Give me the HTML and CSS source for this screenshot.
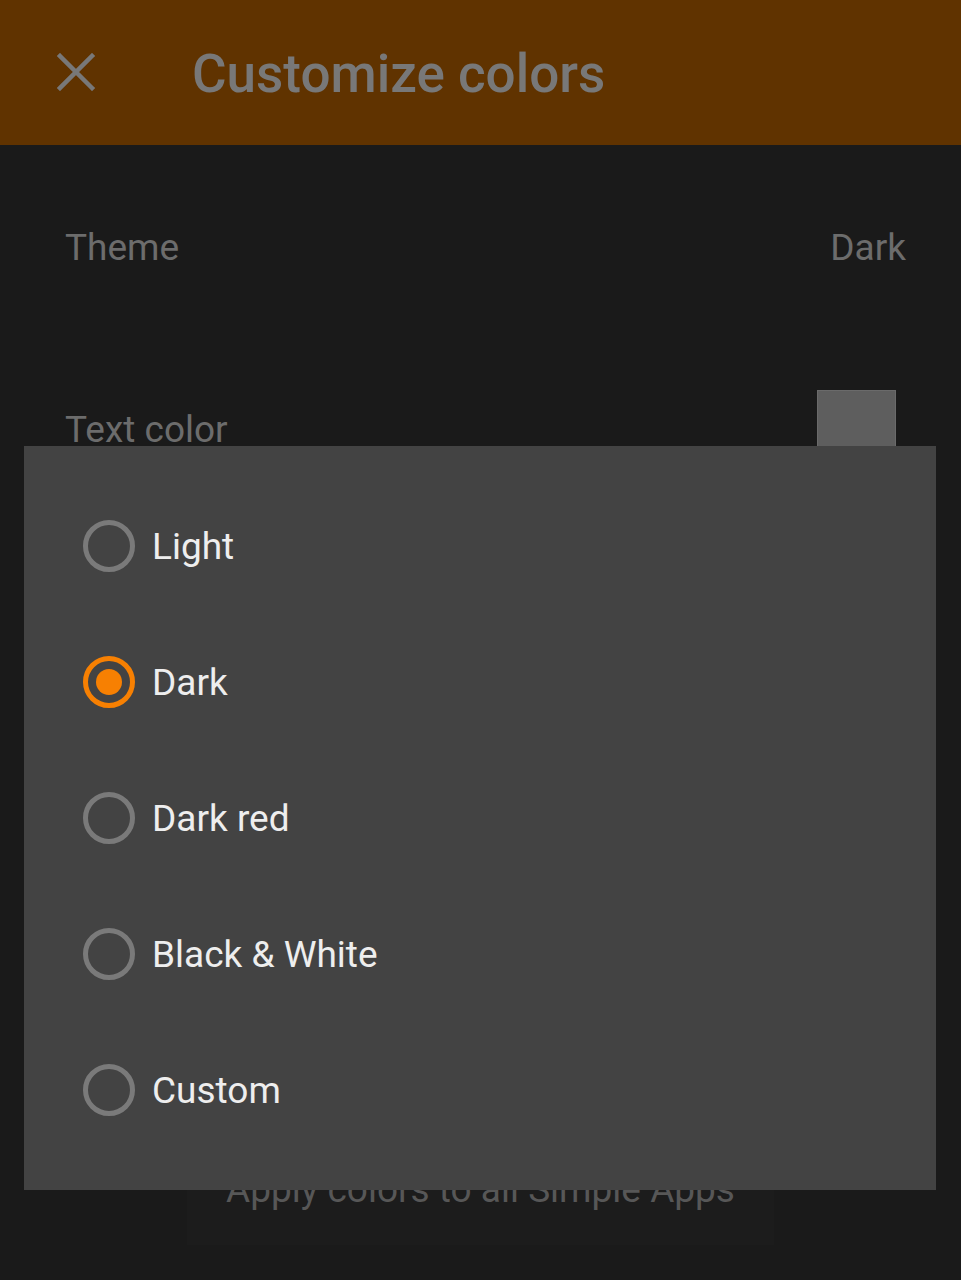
FILE: index.html
```html
<!DOCTYPE html>
<html lang="en">
<head>
    <meta charset="UTF-8">
    <meta name="viewport" content="width=device-width, initial-scale=1.0">
    <title>Customize colors</title>
    <link rel="stylesheet" href="styles.css">
</head>
<body>

    <header class="appbar">
        <svg class="close-icon" viewBox="0 0 38 38" width="38" height="38">
            <path d="M3 3 L35 35 M35 3 L3 35" stroke="#787878" stroke-width="4.5" stroke-linecap="square" fill="none"/>
        </svg>
        <h1 class="title">Customize colors</h1>
    </header>

    <main class="settings">
        <div class="row">
            <span class="label">Theme</span>
            <span class="value">Dark</span>
        </div>
        <div class="row">
            <span class="label">Text color</span>
            <span class="swatch swatch-text"></span>
        </div>
        <div class="apply">Apply colors to all Simple Apps</div>
    </main>

    <div class="dialog">
        <label class="option">
            <span class="radio"></span>
            <span class="option-text">Light</span>
        </label>
        <label class="option">
            <span class="radio checked"></span>
            <span class="option-text">Dark</span>
        </label>
        <label class="option">
            <span class="radio"></span>
            <span class="option-text">Dark red</span>
        </label>
        <label class="option">
            <span class="radio"></span>
            <span class="option-text">Black &amp; White</span>
        </label>
        <label class="option">
            <span class="radio"></span>
            <span class="option-text">Custom</span>
        </label>
    </div>

</body>
</html>
```

FILE: styles.css
```css
body { font-family: Roboto, "Noto Sans", sans-serif; margin: 0; padding: 0; background-color: #1a1a1a; width: 961px; height: 1280px; overflow: hidden; position: relative; }

.appbar { height: 145px; background-color: #603300; display: flex; align-items: center; padding-left: 57px; box-sizing: border-box; }
.close-icon { display: block; margin-top: -2px; }
.title { margin: 2px 0 0 97px; font-size: 53px; font-weight: 500; color: #787878; letter-spacing: 0; }

.settings { padding-top: 11px; }
.row { height: 182px; display: flex; align-items: center; justify-content: space-between; padding: 0 55px 0 65px; }
.label { font-size: 37px; color: #6c6c6c; }
.value { font-size: 37px; color: #6c6c6c; }
.swatch { width: 79px; height: 79px; box-sizing: border-box; border: 1px solid #6a6a6a; margin-right: 10px; }
.swatch-text { background-color: #5e5e5e; }

.apply { width: 587px; height: 112px; margin: 613px auto 0; background-color: #1c1c1c; display: flex; align-items: center; justify-content: center; font-size: 37px; color: #575757; }

.dialog { position: absolute; top: 446px; left: 24px; width: 912px; height: 744px; background-color: #434343; padding: 32px 0; box-sizing: border-box; z-index: 2; }
.option { height: 136px; display: flex; align-items: center; padding-left: 59px; }
.radio { width: 52px; height: 52px; box-sizing: border-box; border: 5px solid #7a7a7a; border-radius: 50%; display: flex; align-items: center; justify-content: center; }
.radio.checked { border-color: #f78002; }
.radio.checked::after { content: ""; width: 26px; height: 26px; border-radius: 50%; background-color: #f78002; }
.option-text { margin-left: 17px; font-size: 37px; color: #eeeeee; }
```
